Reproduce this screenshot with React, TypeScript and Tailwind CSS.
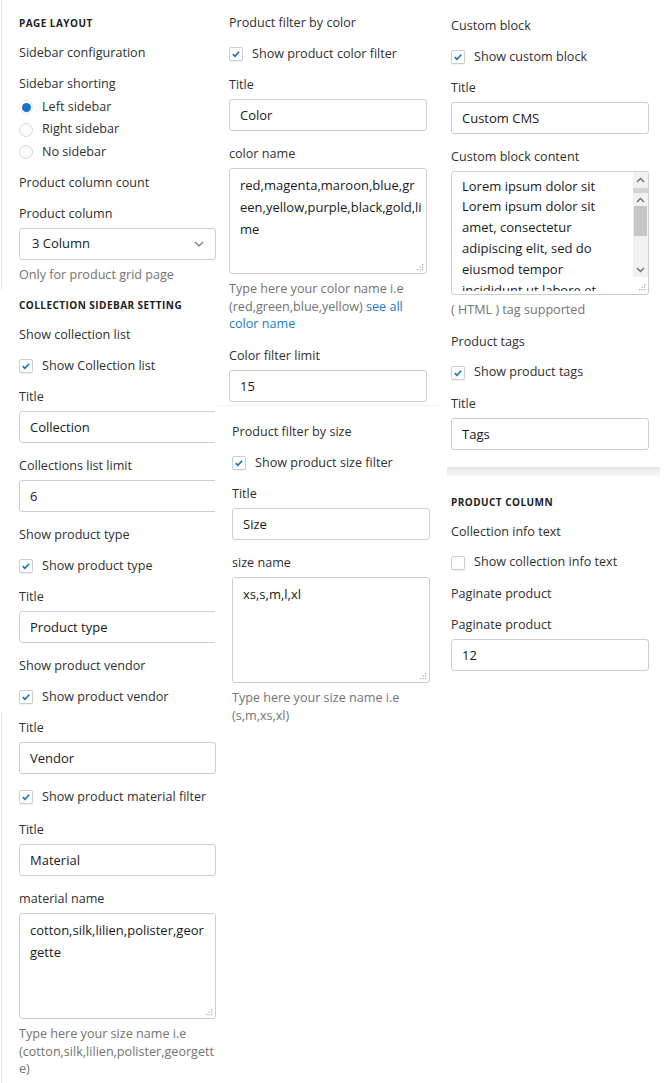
import React from "react";

type Kids = { children: React.ReactNode };

const Label = ({ children }: Kids) => (
  <div className="h-5 whitespace-nowrap text-[12.6px] leading-5 text-[#303030]">{children}</div>
);

const Heading = ({ children }: Kids) => (
  <div className="h-[18px] whitespace-nowrap text-[10px] font-bold uppercase leading-[18px] tracking-[0.45px] text-[#212121]">
    {children}
  </div>
);

const Help = ({ children }: Kids) => (
  <div className="mt-[2px] mb-[2px] whitespace-nowrap text-[12.6px] leading-[17.5px] text-[#737373]">{children}</div>
);

const Check = ({ label, checked = true }: { label: string; checked?: boolean }) => (
  <div className="flex h-5 items-center gap-[9px]">
    <span className="flex h-[14px] w-[14px] shrink-0 items-center justify-center rounded-[2px] border border-[#c9ced4] bg-white shadow-[0_1px_1px_rgba(0,0,0,0.06)]">
      {checked && (
        <svg viewBox="0 0 12 12" className="h-[12px] w-[12px]">
          <path d="M2.8 6.2l2.1 2.1 4.2-4.6" fill="none" stroke="#1476c6" strokeWidth="1.7" />
        </svg>
      )}
    </span>
    <span className="whitespace-nowrap text-[12.6px] text-[#303030]">{label}</span>
  </div>
);

const Radio = ({ label, checked = false }: { label: string; checked?: boolean }) => (
  <div className="flex h-5 items-center gap-[9px]">
    <span
      className={`flex h-[14px] w-[14px] shrink-0 items-center justify-center rounded-full border ${
        checked ? "border-[#e3e8ee] bg-white" : "border-[#d6dbe0] bg-[#fbfbfb]"
      }`}
    >
      {checked && <span className="h-[9px] w-[9px] rounded-full bg-[#1476c6]" />}
    </span>
    <span className="whitespace-nowrap text-[12.6px] text-[#303030]">{label}</span>
  </div>
);

const Input = ({ value, w = "w-[198px]" }: { value: string; w?: string }) => (
  <div
    className={`h-8 ${w} shrink-0 whitespace-nowrap rounded-[3px] border border-[#c9ced4] bg-white pl-[10px] text-[13px] leading-[31px] text-[#1a1a1a]`}
  >
    {value}
  </div>
);

const Grip = () => (
  <svg viewBox="0 0 8 8" className="h-[8px] w-[8px]">
    <g fill="#b5b5b5">
      <rect x="6" y="1" width="1.3" height="1.3" />
      <rect x="3.5" y="3.5" width="1.3" height="1.3" />
      <rect x="6" y="3.5" width="1.3" height="1.3" />
      <rect x="1" y="6" width="1.3" height="1.3" />
      <rect x="3.5" y="6" width="1.3" height="1.3" />
      <rect x="6" y="6" width="1.3" height="1.3" />
    </g>
  </svg>
);

const TextArea = ({ lines, w = "w-[198px]" }: { lines: string[]; w?: string }) => (
  <div className={`flex h-[106px] ${w} flex-col rounded-[3px] border border-[#c9ced4] bg-white`}>
    <div className="flex-1 whitespace-nowrap pl-[10px] pt-[5px] text-[13px] leading-[22px] text-[#1a1a1a]">
      {lines.map((l) => (
        <div key={l}>{l}</div>
      ))}
    </div>
    <div className="flex justify-end pb-[2px] pr-[2px]">
      <Grip />
    </div>
  </div>
);

const Arrow = ({ up }: { up?: boolean }) => (
  <svg viewBox="0 0 9 6" className="h-[6px] w-[9px]">
    <path d={up ? "M1 5l3.5-3.5L8 5" : "M1 1l3.5 3.5L8 1"} fill="none" stroke="#6a6a6a" strokeWidth="1.3" />
  </svg>
);

const CmsArea = () => (
  <div className="flex h-[124px] w-[198px] overflow-hidden rounded-[3px] border border-[#c9ced4] bg-white">
    <div className="h-[119px] flex-1 overflow-hidden whitespace-nowrap pl-[10px] pt-[5px] text-[13px] leading-[21px] text-[#1a1a1a]">
      <div className="h-[19px] leading-[19px]">Lorem ipsum dolor sit</div>
      <div>Lorem ipsum dolor sit</div>
      <div>amet, consectetur</div>
      <div>adipiscing elit, sed do</div>
      <div>eiusmod tempor</div>
      <div>incididunt ut labore et</div>
    </div>
    <div className="flex w-[15px] flex-col">
      <div className="flex flex-col bg-[#f1f1f1]">
        <div className="flex h-[16px] items-center justify-center">
          <Arrow up />
        </div>
        <div className="h-[5px] bg-[#d4d4d4]" />
        <div className="flex h-[13px] items-center justify-center">
          <Arrow up />
        </div>
        <div className="mx-[1px] h-[30px] bg-[#c6c6c6]" />
        <div className="h-[26px]" />
        <div className="flex h-[15px] items-center justify-center">
          <Arrow />
        </div>
      </div>
      <div className="flex flex-1 items-end justify-end pb-[3px] pr-[2px]">
        <Grip />
      </div>
    </div>
  </div>
);

const Field = ({ label, value, w }: { label: string; value: string; w?: string }) => (
  <div className="mb-[2px] flex flex-col gap-1">
    <Label>{label}</Label>
    <Input value={value} w={w} />
  </div>
);

export default function App() {
  return (
    <div className="flex h-[1083px] w-[667px] overflow-hidden bg-white font-['Open_Sans','Noto_Sans',sans-serif]">
      {/* column one */}
      <div className="flex w-[217px] shrink-0 flex-col">
        <div className="ml-[1px] flex h-[290px] flex-col gap-[11px] border-l border-[#e4e6e8] pl-[17px] pt-[14px]">
          <Heading>Page layout</Heading>
          <Label>Sidebar configuration</Label>
          <div className="flex flex-col">
            <Label>Sidebar shorting</Label>
            <div className="mt-[3px] flex flex-col gap-[2.5px]">
              <Radio label="Left sidebar" checked />
              <Radio label="Right sidebar" />
              <Radio label="No sidebar" />
            </div>
          </div>
          <Label>Product column count</Label>
          <div className="flex flex-col gap-1">
            <Label>Product column</Label>
            <div className="flex h-8 w-[197px] items-center justify-between rounded-[3px] border border-[#c9ced4] bg-white pl-[12px] pr-[11px] text-[13px] text-[#1a1a1a]">
              <span>3 Column</span>
              <svg viewBox="0 0 10 6" className="h-[6px] w-[10px]">
                <path d="M1 1l4 4 4-4" fill="none" stroke="#6b7785" strokeWidth="1.2" />
              </svg>
            </div>
            <Help>Only for product grid page</Help>
          </div>
        </div>
        <div className="flex h-[422px] w-[215px] flex-col gap-[11px] overflow-hidden pl-[19px] pt-[6px]">
          <Heading>Collection sidebar setting</Heading>
          <Label>Show collection list</Label>
          <Check label="Show Collection list" />
          <Field label="Title" value="Collection" w="w-[210px]" />
          <Field label="Collections list limit" value="6" w="w-[210px]" />
          <Label>Show product type</Label>
          <Check label="Show product type" />
          <Field label="Title" value="Product type" w="w-[210px]" />
          <Label>Show product vendor</Label>
          <Check label="Show product vendor" />
        </div>
        <div className="ml-[1px] flex flex-1 flex-col gap-[11px] border-l border-[#e4e6e8] pl-[17px] pt-[6px]">
          <Field label="Title" value="Vendor" w="w-[197px]" />
          <Check label="Show product material filter" />
          <div className="mt-[2px]">
            <Field label="Title" value="Material" w="w-[197px]" />
          </div>
          <div className="flex flex-col gap-1">
            <Label>material name</Label>
            <TextArea w="w-[197px]" lines={["cotton,silk,lilien,polister,geor", "gette"]} />
            <Help>
              Type here your size name i.e
              <br />
              (cotton,silk,lilien,polister,georgett
              <br />
              e)
            </Help>
          </div>
        </div>
      </div>

      {/* column two */}
      <div className="flex w-[223px] shrink-0 flex-col">
        <div className="flex h-[405px] flex-col gap-[11px] pl-[12px] pt-[13px]">
          <Label>Product filter by color</Label>
          <Check label="Show product color filter" />
          <Field label="Title" value="Color" />
          <div className="flex flex-col gap-1">
            <Label>color name</Label>
            <TextArea lines={["red,magenta,maroon,blue,gr", "een,yellow,purple,black,gold,li", "me"]} />
            <Help>
              Type here your color name i.e
              <br />
              (red,green,blue,yellow) <span className="text-[#1a7bc4]">see all</span>
              <br />
              <span className="text-[#1a7bc4]">color name</span>
            </Help>
          </div>
          <Field label="Color filter limit" value="15" />
        </div>
        <div className="flex flex-1 flex-col gap-[11px] border-t border-[#f3f3f3] pl-[15px] pt-[16px]">
          <Label>Product filter by size</Label>
          <Check label="Show product size filter" />
          <Field label="Title" value="Size" />
          <div className="flex flex-col gap-1">
            <Label>size name</Label>
            <TextArea lines={["xs,s,m,l,xl"]} />
            <Help>
              Type here your size name i.e
              <br />
              (s,m,xs,xl)
            </Help>
          </div>
        </div>
      </div>

      {/* column three */}
      <div className="flex flex-1 flex-col pl-[11px] pt-[16px]">
        <div className="flex flex-col gap-[11px]">
          <Label>Custom block</Label>
          <Check label="Show custom block" />
          <Field label="Title" value="Custom CMS" />
          <div className="flex flex-col gap-1">
            <Label>Custom block content</Label>
            <CmsArea />
            <Help>( HTML ) tag supported</Help>
          </div>
          <Label>Product tags</Label>
          <Check label="Show product tags" />
          <Field label="Title" value="Tags" />
        </div>
        <div className="ml-[-4px] mt-[15px] h-[9px] w-[213px] bg-linear-to-b from-[#e4e4e4] to-[#f7f7f7]" />
        <div className="flex flex-col gap-[11px] pt-[17px]">
          <Heading>Product column</Heading>
          <Label>Collection info text</Label>
          <Check label="Show collection info text" checked={false} />
          <Label>Paginate product</Label>
          <Field label="Paginate product" value="12" />
        </div>
      </div>
    </div>
  );
}
